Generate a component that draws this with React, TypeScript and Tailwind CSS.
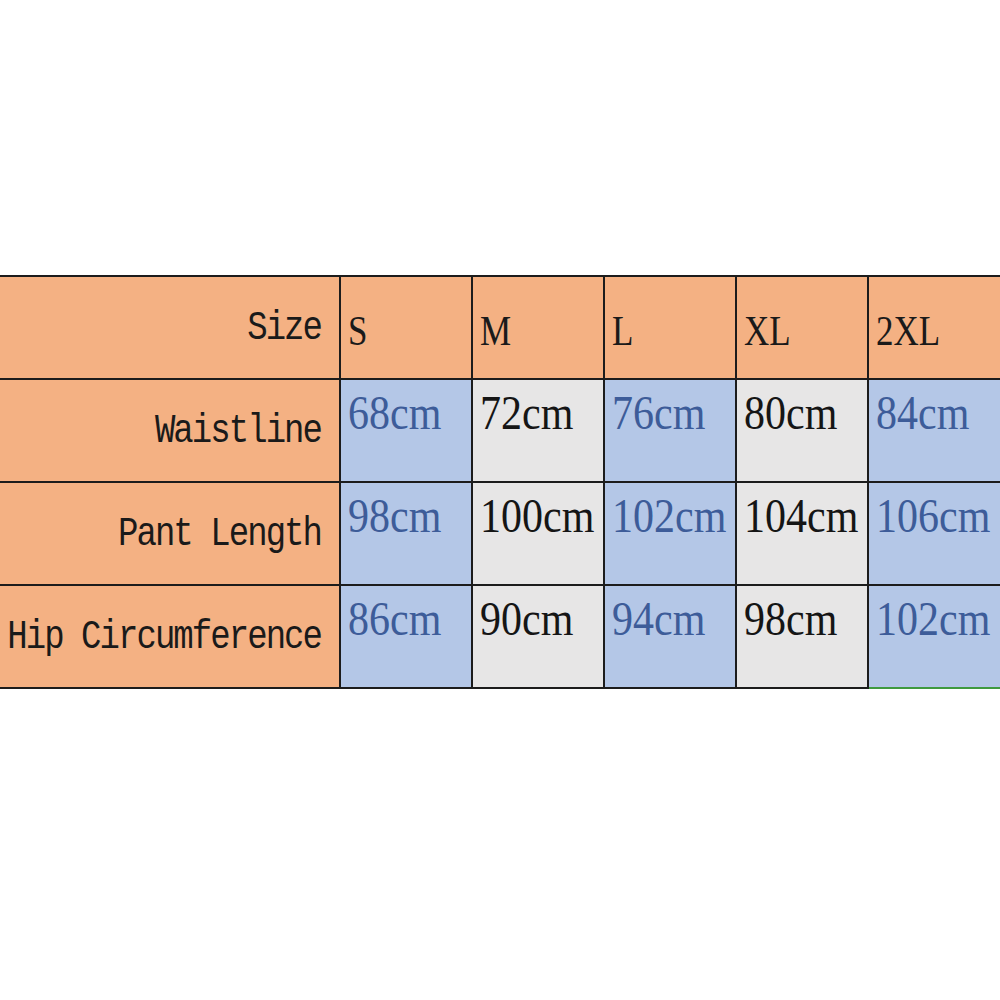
import React from "react";

// ── Size chart data ──
const SIZES = ["S", "M", "L", "XL", "2XL"];

const ROWS = [
  { label: "Waistline", values: ["68cm", "72cm", "76cm", "80cm", "84cm"] },
  { label: "Pant Length", values: ["98cm", "100cm", "102cm", "104cm", "106cm"] },
  { label: "Hip Circumference", values: ["86cm", "90cm", "94cm", "98cm", "102cm"] },
];

const labelFont = { fontFamily: '"Liberation Mono", "Noto Sans CJK SC", monospace' };
const serifFont = { fontFamily: '"Liberation Serif", "Noto Sans CJK SC", serif' };

function LabelCell({ children }: { children: React.ReactNode }) {
  return (
    <div className="flex h-[103px] items-center justify-end border-r-2 border-b-2 border-[#1c1c1c] bg-[#f4b183] pr-[18px]">
      <span
        className="inline-block scale-y-[1.2] text-[34px] leading-none tracking-[-1.95px] text-[#1a1a1a]"
        style={labelFont}
      >
        {children}
      </span>
    </div>
  );
}

export default function App() {
  return (
    <div className="h-[1000px] w-[1000px] overflow-hidden bg-white pt-[275px]">
      <div className="grid grid-cols-[341px_132px_132px_132px_132px_131px] border-t-2 border-[#1c1c1c]">
        {/* Header row */}
        <LabelCell>Size</LabelCell>
        {SIZES.map((s, i) => (
          <div
            key={s}
            className={
              "flex h-[103px] items-center border-b-2 border-[#1c1c1c] bg-[#f4b183] pl-[7px] pt-[5px] " +
              (i < SIZES.length - 1 ? "border-r-2" : "")
            }
          >
            <span
              className="inline-block origin-center scale-y-[1.22] text-[35px] leading-none text-[#1a1a1a]"
              style={serifFont}
            >
              {s}
            </span>
          </div>
        ))}

        {/* Measurement rows */}
        {ROWS.map((row, r) => (
          <React.Fragment key={row.label}>
            <LabelCell>{row.label}</LabelCell>
            {row.values.map((v, i) => {
              const blue = i % 2 === 0;
              const last = i === row.values.length - 1;
              const lastRow = r === ROWS.length - 1;
              return (
                <div
                  key={i}
                  className={
                    "h-[103px] pl-[7px] pt-[8px] " +
                    (blue ? "bg-[#b4c7e7] " : "bg-[#e7e6e6] ") +
                    (last ? "" : "border-r-2 border-[#1c1c1c] ") +
                    (last && lastRow
                      ? "border-b-2 border-b-[#3f9a3f]"
                      : "border-b-2 border-b-[#1c1c1c]")
                  }
                >
                  <span
                    className={
                      "inline-block origin-top scale-y-[1.16] text-[42px] leading-none " +
                      (blue ? "text-[#3d5c99]" : "text-[#151515]")
                    }
                    style={serifFont}
                  >
                    {v}
                  </span>
                </div>
              );
            })}
          </React.Fragment>
        ))}
      </div>
    </div>
  );
}
